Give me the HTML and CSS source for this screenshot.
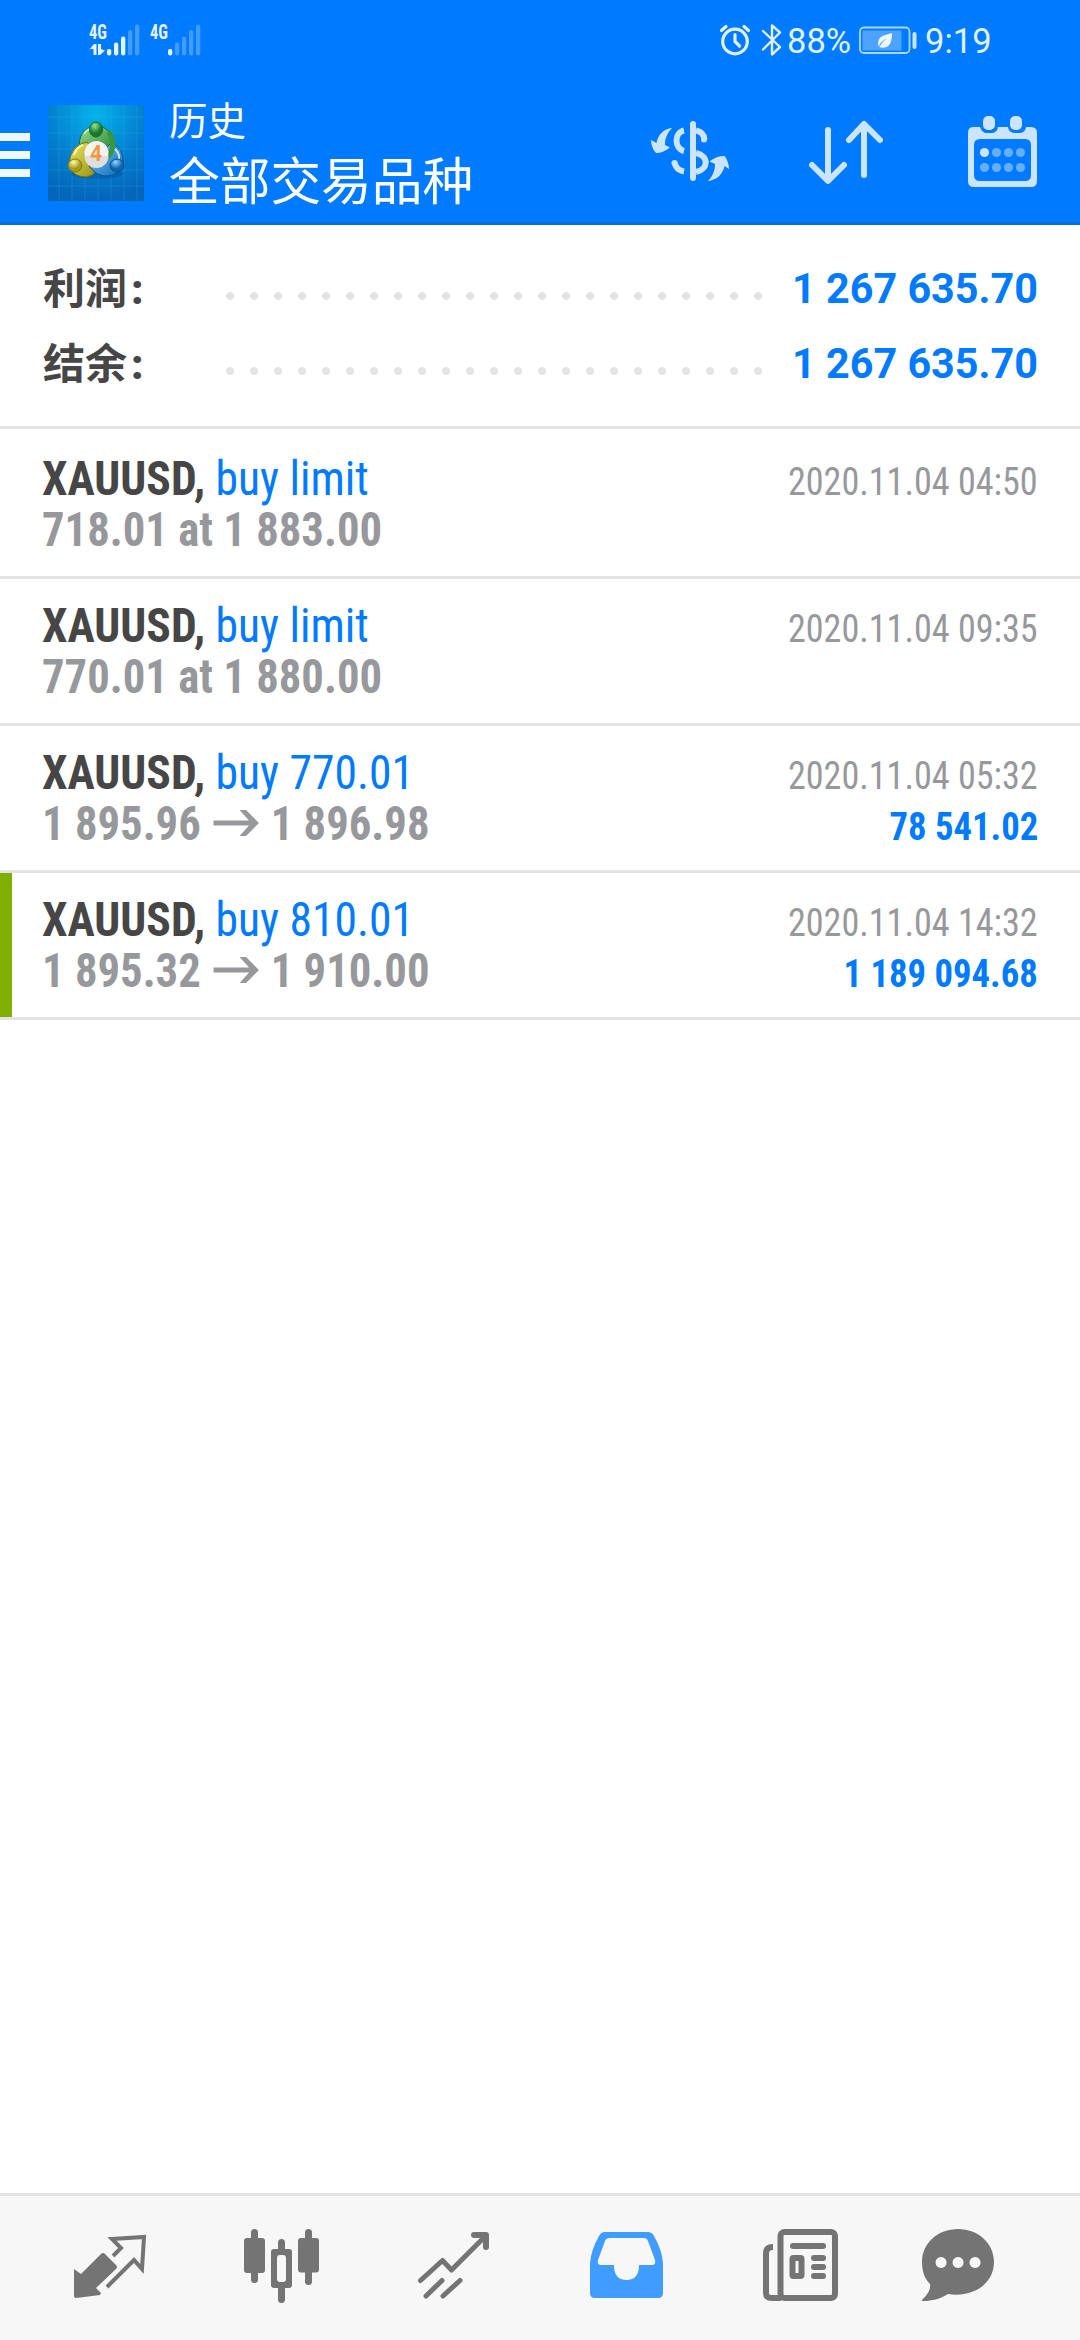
FILE: index.html
```html
<!DOCTYPE html>
<html lang="zh-CN">
<head>
<meta charset="utf-8">
<title>历史</title>
<link rel="stylesheet" href="styles.css">
</head>
<body>
<div class="screen">
  <header class="top">
    <div class="status">
      <svg class="signals" viewBox="86 20 120 40" width="120" height="40">
        <g class="net"><text x="89" y="38.5" textLength="18" lengthAdjust="spacingAndGlyphs">4G</text><text x="150" y="38.5" textLength="18" lengthAdjust="spacingAndGlyphs">4G</text></g>
        <g fill="#e3f3ff">
          <path d="M89 50l5-6h2.500v11h-3v-6H89zM98 44h3v5l4 1.500-5 4.500h-2z"/>
          <rect x="107" y="49" width="4.300" height="6.500" rx="2"/><rect x="114" y="42.500" width="4.300" height="13" rx="2"/><rect x="121" y="36.500" width="4.300" height="19" rx="2"/>
          <rect x="168" y="49" width="4.300" height="6.500" rx="2"/>
        </g>
        <g fill="#409cff">
          <rect x="128" y="30" width="4.300" height="25.500" rx="2"/><rect x="135" y="24.500" width="4.300" height="31" rx="2"/>
          <rect x="175" y="42.500" width="4.300" height="13" rx="2"/><rect x="182" y="36.500" width="4.300" height="19" rx="2"/><rect x="189" y="30" width="4.300" height="25.500" rx="2"/><rect x="196" y="24.500" width="4.300" height="31" rx="2"/>
        </g>
      </svg>
      <svg class="alarm" viewBox="718 22 66 36" width="66" height="36" fill="none" stroke="#dff1ff" stroke-width="3.200" stroke-linecap="round" stroke-linejoin="round">
        <circle cx="735" cy="41.500" r="12.300"/><path d="M735 34.500v7l4.500 4.500M721.500 30.500l4.500-4M748.500 30.500l-4.500-4"/>
        <path stroke-width="2.400" d="M763 31l17 16-8 7.500V25.500l8 7-17 17"/>
      </svg>
      <span class="pct">88%</span>
      <svg class="battery" viewBox="858 22 62 36" width="62" height="36">
        <rect x="860" y="27.500" width="49.500" height="25.500" rx="4" fill="none" stroke="#a9d5ff" stroke-width="1.800"/>
        <rect x="862.500" y="30.500" width="39" height="20" fill="#4da3ff"/>
        <rect x="912.500" y="32" width="4" height="17" rx="2" fill="#c8e5ff"/>
        <path d="M892 33q0 14-8 14.500-3 .5-4.500-.5 3-6 8-9-7 3-9 9-2-8 4-11 4-1.500 9.500-3z" fill="#eef8ff"/>
      </svg>
      <span class="clock">9:19</span>
    </div>
    <div class="bar">
      <svg class="menu" width="30" height="44" viewBox="0 0 30 44" fill="#f0f8ff"><path d="M0 0h30v8H0zM0 18h30v8H0zM0 36h30v8H0z"/></svg>
      <svg class="logo" width="96" height="96" viewBox="0 0 96 96">
        <defs>
          <radialGradient id="sky" cx=".5" cy=".1" r=".9"><stop offset="0" stop-color="#04b3e8"/><stop offset=".55" stop-color="#047fd0"/><stop offset="1" stop-color="#0465b9"/></radialGradient>
          <linearGradient id="g" x2="1" y2="1"><stop stop-color="#9bdc91"/><stop offset="1" stop-color="#187a29"/></linearGradient>
          <linearGradient id="y" x2="1" y2="1"><stop stop-color="#f1e765"/><stop offset="1" stop-color="#938f0c"/></linearGradient>
          <linearGradient id="b" x2="1" y2="1"><stop stop-color="#82c9f7"/><stop offset="1" stop-color="#0869b8"/></linearGradient>
          <radialGradient id="gh" cx=".4" cy=".25"><stop stop-color="#9ae398"/><stop offset="1" stop-color="#17792a"/></radialGradient>
          <radialGradient id="yh" cx=".4" cy=".25"><stop stop-color="#fffbb0"/><stop offset="1" stop-color="#a39a14"/></radialGradient>
          <radialGradient id="bh" cx=".4" cy=".25"><stop stop-color="#94d6ff"/><stop offset="1" stop-color="#0c62ac"/></radialGradient>
        </defs>
        <rect width="96" height="96" fill="url(#sky)"/>
        <path d="M11 0v96M24 0v96M37 0v96M50 0v96M63 0v96M76 0v96M89 0v96M0 12h96M0 28h96M0 44h96M0 65h96M0 81h96" stroke="#35adea" stroke-opacity=".28" fill="none"/>
        <ellipse cx="49" cy="69" rx="26" ry="5" fill="#034b8b" opacity=".35"/>
        <circle cx="48.500" cy="38" r="17" fill="url(#g)" stroke="#1c6940"/>
        <path d="M21 60q1-20 18-23l10 14q4 18-10 21-15 0-18-12z" fill="url(#y)" stroke="#6d720d"/>
        <path d="M75 61q2-20-13-22l-13 14-8 8q8 11 19 10 12-2 15-10z" fill="url(#b)" stroke="#0b538a"/>
        <path d="M61 27q8 14-1 25" fill="none" stroke="#39963a" stroke-width="5"/>
        <path d="M26 50q3-8 9-10" fill="none" stroke="#f8f5a3" stroke-width="2"/>
        <path d="M36 29q4-6 10-6" fill="none" stroke="#c1ecb9" stroke-width="2"/>
        <path d="M67 44q5 5 4 10" fill="none" stroke="#c2e8fd" stroke-width="2"/>
        <ellipse cx="48" cy="24.500" rx="6.500" ry="7.500" fill="url(#gh)" stroke="#176a30"/>
        <ellipse cx="27" cy="60.500" rx="7" ry="6.500" fill="url(#yh)" stroke="#7d7c18"/>
        <ellipse cx="69" cy="60.500" rx="7" ry="6.500" fill="url(#bh)" stroke="#0b538a"/>
        <circle cx="48.500" cy="48" r="12" fill="#f6f4f3"/><path d="M36.500 51h24a12 12 0 0 1-24 0z" fill="#dedede"/>
        <text class="four" x="42" y="56" textLength="12" lengthAdjust="spacingAndGlyphs">4</text>
      </svg>
      <div class="titles"><div class="small">历史</div><div class="big">全部交易品种</div></div>
      <div class="tools">
        <svg width="80" height="72" viewBox="650 116 80 72" fill="#cbe4ff">
          <path d="M672 128c-9 1-14 7-15.500 15L651 140c0 5 2 10 5 13 5 0 10-2 14-5.500l-5-2.500c0-6 2-12 7-17zM708 181c9-1 15-7 16.500-15l4.500 3c0-5-2-10-4.500-13-6 0-11 2-15 5.500l5.500 2.500c0 6-2 12-7 17z"/>
          <rect x="690" y="121" width="6" height="60" rx="3"/>
          <path d="M684 130.500c-10 2-10 18 0 20.500M674.500 162.500c1 5 4 8 9.500 9M696 130.500c5.500 1 8 4 8.500 9M696 153c13 3 13 16 0 19" fill="none" stroke="#cbe4ff" stroke-width="6"/><circle cx="674.500" cy="163" r="3"/><circle cx="704" cy="139.500" r="3"/>
        </svg>
        <svg width="80" height="72" viewBox="806 116 80 72" fill="none" stroke="#cbe4ff" stroke-width="6" stroke-linecap="round" stroke-linejoin="round"><path d="M828 130v50M812 165l16 16 16-16M864 175v-50M849 140l15-16 16 16"/></svg>
        <svg width="72" height="72" viewBox="967 116 72 72" fill="#cbe4ff">
          <path fill-rule="evenodd" d="M973 127H980q2 6 7 6h4q6 0 7-6h10q1 6 7 6h4q6 0 7-6h5q6 0 6 6v48q0 6-6 6h-57q-6 0-6-6v-48q0-6 5-6zM980 139q-6 0-6 6v30q0 6 6 6h45q6 0 6-6v-30q0-6-6-6z"/>
          <rect x="983" y="116" width="12" height="14" rx="5"/><rect x="1010" y="116" width="12" height="14" rx="5"/>
          <circle cx="984.500" cy="152.500" r="4.600"/><g fill="#66afff"><circle cx="996.500" cy="152.500" r="4.600"/><circle cx="1008.500" cy="152.500" r="4.600"/><circle cx="1020.500" cy="152.500" r="4.600"/><circle cx="984.500" cy="167.500" r="4.600"/><circle cx="996.500" cy="167.500" r="4.600"/><circle cx="1008.500" cy="167.500" r="4.600"/><circle cx="1020.500" cy="167.500" r="4.600"/></g>
        </svg>
      </div>
    </div>
  </header>
  <section class="summary">
    <div class="sum"><span class="label">利润<b>:</b></span><i class="dots"></i><span class="total">1 267 635.70</span></div>
    <div class="sum"><span class="label">结余<b>:</b></span><i class="dots"></i><span class="total">1 267 635.70</span></div>
  </section>
  <main class="list">
    <article class="deal first">
      <div class="line"><span class="sym">XAUUSD, <span class="op">buy limit</span></span><span class="date">2020.11.04 04:50</span></div>
      <div class="line"><span class="price">718.01 at 1 883.00</span></div>
    </article>
    <article class="deal">
      <div class="line"><span class="sym">XAUUSD, <span class="op">buy limit</span></span><span class="date">2020.11.04 09:35</span></div>
      <div class="line"><span class="price">770.01 at 1 880.00</span></div>
    </article>
    <article class="deal">
      <div class="line"><span class="sym">XAUUSD, <span class="op">buy 770.01</span></span><span class="date">2020.11.04 05:32</span></div>
      <div class="line"><span class="price">1 895.96 <svg class="arrow" viewBox="0 0 46 26" preserveAspectRatio="none"><path d="M0 10.500h36L26.500 0H33l13 13-13 13h-6.500L36 15.500H0z"/></svg> 1 896.98</span><span class="profit">78 541.02</span></div>
    </article>
    <article class="deal closed">
      <div class="line"><span class="sym">XAUUSD, <span class="op">buy 810.01</span></span><span class="date">2020.11.04 14:32</span></div>
      <div class="line"><span class="price">1 895.32 <svg class="arrow" viewBox="0 0 46 26" preserveAspectRatio="none"><path d="M0 10.500h36L26.500 0H33l13 13-13 13h-6.500L36 15.500H0z"/></svg> 1 910.00</span><span class="profit">1 189 094.68</span></div>
    </article>
  </main>
  <nav class="tabs">
    <svg viewBox="24 2196 172 144" fill="#747474"><path d="M74 2269l7 5 20-20q2-2 4 0l11 11q2 2 0 4l-20 19 5 5-1 2-24 3q-2 0-2-2z"/><path d="M113 2256l8-8-9-9 32-2-2 32-8-9-27 27" fill="none" stroke="#747474" stroke-width="4"/></svg>
    <svg viewBox="196 2196 172 144" fill="#747474"><rect x="251" y="2229" width="7" height="54" rx="3.500"/><rect x="244" y="2238" width="21" height="35" rx="3"/><rect x="305" y="2229" width="7" height="56" rx="3.500"/><rect x="298" y="2238" width="21" height="34.500" rx="3"/><rect x="278" y="2239" width="7" height="64" rx="3.500"/><rect x="271" y="2249" width="21" height="39" rx="3"/><rect x="277" y="2255" width="9" height="27" rx="3" fill="#f7f7f7"/></svg>
    <svg viewBox="368 2196 172 144" fill="none" stroke="#747474"><path stroke-width="5" stroke-linecap="round" stroke-linejoin="round" d="M420.500 2280.500l22-20 9 9.500 34-34M426 2296l16-15.500M443 2296l17-15.500"/><path stroke-width="6" stroke-linecap="round" stroke-linejoin="round" d="M474 2235h12v12"/></svg>
    <svg viewBox="540 2196 172 144" fill="#409cff"><path fill-rule="evenodd" d="M605 2232h43q4 0 6 4 8 14 9 27v30q0 5-5 5h-63q-5 0-5-5v-30q1-13 9-27 2-4 6-4zM610 2238q-4 0-5 3l-7 19q-1 5 3 5h13q0 15 12.500 15T639 2265h13q4 0 3-5l-7-19q-1-3-5-3z"/></svg>
    <svg viewBox="713 2196 172 144" fill="none" stroke="#747474" stroke-width="6"><rect x="780.500" y="2232" width="54.500" height="66" rx="4"/><path d="M773 2247q-7 0-7 6v40q0 5 6 5h9"/><path stroke-linecap="round" d="M793 2246h30M814 2258h9M814 2267h9M814 2276h9"/><rect x="792.500" y="2258" width="9" height="18" rx="1"/></svg>
    <svg viewBox="872 2196 172 144" fill="#747474"><path fill-rule="evenodd" d="M958 2229c20 0 36 14 36 33 0 21-20 36-46 32-8 5-16 7-25 7-2 0-1-1 0-2 5-5 8-10 7-15-5-5-8-12-8-22 0-19 16-33 36-33zM941 2257a5.500 5.500 0 1 0 .1 0zM958 2257a5.500 5.500 0 1 0 .1 0zM975 2257a5.500 5.500 0 1 0 .1 0z"/></svg>
  </nav>
</div>
</body>
</html>
```
FILE: styles.css
```css
* { box-sizing: border-box; }
body { margin: 0; background: #fff; font-family: Roboto, "Noto Sans CJK SC", sans-serif; }
svg { display: block; flex: none; }
.screen { width: 1080px; height: 2340px; display: flex; flex-direction: column; background: #fff; overflow: hidden; }
.top { height: 225px; background: #007aff; border-bottom: 3px solid #096ed9; color: #fff; }
.status { height: 80px; display: flex; align-items: flex-start; padding: 20px 0 0 86px; color: #dff1ff; font-size: 34.5px; line-height: 40px; white-space: nowrap; }
.signals { margin-right: 512px; }
.alarm { margin-top: 2px; }
.pct { width: 72px; padding-left: 3px; margin-top: 1px; }
.battery { margin: 2px 5px 0 2px; }
.clock { margin-top: 1px; }
.net { font: bold 19.5px "Roboto Condensed", Roboto, sans-serif; fill: #e3f3ff; }
.bar { height: 142px; display: flex; align-items: flex-start; }
.menu { margin: 53px 18px 0 0; }
.logo { margin-top: 25px; }
.four { font: bold 22px Roboto, sans-serif; fill: #f2983d; }
.titles { margin: 16px 0 0 25px; width: 400px; white-space: nowrap; font-weight: 400; }
.small { font-size: 38.6px; line-height: 52px; }
.big { font-size: 50.7px; line-height: 70px; }
.tools { display: flex; margin: 36px 0 0 81px; }
.tools svg + svg { margin-left: 76px; }
.tools svg:last-child { margin-left: 81px; }
.summary { height: 204px; padding: 26px 42px 0 43px; border-bottom: 3px solid #e3e3e3; }
.sum { display: flex; height: 75px; line-height: 75px; font-size: 42px; font-weight: bold; align-items: baseline; white-space: nowrap; }
.label { width: 183px; color: #464646; transform: translateY(1px); }
.label b { margin-left: 4px; }
.dots { width: 536px; height: 8px; background: radial-gradient(circle at 4px 4px, #e3e3e3 3.6px, transparent 4.3px) 0 0 / 24px 8px; transform: translateY(-3px); }
.total { margin-left: auto; color: #007aff; transform: scaleX(.984); transform-origin: right; }
.deal { height: 147px; padding: 21px 42px 0; border-bottom: 3px solid #e3e3e3; }
.deal.first { height: 150px; padding-top: 24px; }
.deal.closed { background: linear-gradient(#7fb000, #7fb000) 0 0 / 12px 100% no-repeat; }
.line { height: 51px; line-height: 51px; display: flex; justify-content: space-between; align-items: baseline; white-space: nowrap; font-family: "Roboto Condensed", Roboto, sans-serif; font-stretch: 75%; font-size: 48px; }
.sym { font-weight: bold; color: #464646; transform: scaleX(.949); transform-origin: left; }
.op { font-weight: 400; color: #007aff; }
.price { font-weight: bold; color: #97989c; transform: scaleX(.931); transform-origin: left; }
.date { font-size: 39px; color: #97989c; transform: scaleX(.926); transform-origin: right; }
.profit { font-size: 39px; font-weight: bold; color: #007aff; transform: scaleX(.94); transform-origin: right; }
.arrow { display: inline-block; width: 49px; height: 26px; margin: 0 2px; fill: #97989c; vertical-align: 4px; }
.tabs { height: 147px; margin-top: auto; display: flex; background: #f7f7f7; border-top: 3px solid #e3e3e3; padding-left: 24px; }
.tabs svg { width: 172px; height: 144px; }
.tabs svg:nth-child(5) { margin-left: 1px; }
.tabs svg:nth-child(6) { margin-left: -13px; }
```
